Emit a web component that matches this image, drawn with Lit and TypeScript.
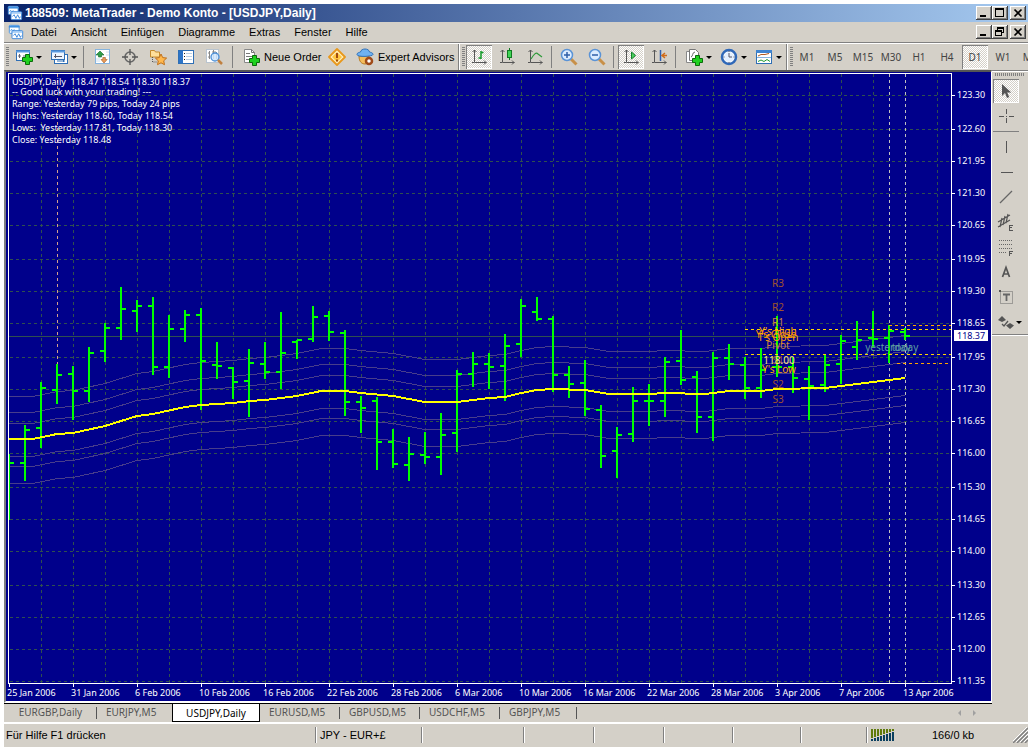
import { LitElement, html, svg, css, nothing, SVGTemplateResult } from "lit";
import { customElement } from "lit/decorators.js";
import { classMap } from "lit/directives/class-map.js";

/* ---------- chart data, in chart units: [open, high, low, close] ---------- */
const FIRST_BAR = 9;
const BAR_STEP = 16;
const BARS: number[][] = [
  [0, 454, 520, 463], [463, 425, 481, 430], [428, 382, 448, 388], [390, 364, 404, 375],
  [374, 366, 420, 391], [391, 347, 402, 353], [351, 323, 362, 328], [328, 287, 340, 309],
  [311, 300, 332, 306], [306, 297, 375, 367], [367, 315, 378, 329], [329, 310, 342, 315],
  [315, 308, 410, 361], [365, 342, 379, 366], [368, 367, 399, 382], [381, 349, 417, 363],
  [364, 342, 379, 372], [372, 312, 389, 353], [342, 340, 359, 340], [339, 306, 342, 317],
  [316, 311, 341, 332], [333, 330, 416, 402], [402, 396, 433, 408], [401, 397, 470, 442],
  [442, 429, 468, 464], [465, 437, 481, 454], [455, 432, 464, 457], [457, 413, 475, 435],
  [433, 370, 452, 374], [374, 352, 387, 364], [364, 353, 389, 367], [366, 334, 401, 346],
  [344, 299, 357, 306], [312, 297, 321, 319], [319, 316, 392, 375], [375, 366, 398, 384],
  [383, 360, 416, 409], [410, 405, 468, 456], [451, 427, 478, 435], [434, 387, 442, 401],
  [401, 384, 426, 401], [401, 357, 417, 362], [361, 330, 385, 380], [377, 371, 433, 417],
  [417, 352, 441, 358], [358, 344, 380, 364], [365, 357, 399, 388], [388, 348, 398, 370],
  [367, 316, 377, 367], [367, 357, 393, 378], [379, 366, 420, 386], [385, 354, 392, 365],
  [364, 335, 384, 341], [347, 321, 360, 340], [338, 311, 347, 339], [338, 325, 363, 331],
  [332, 328, 340, 336],
];

const AVERAGE: number[][] = [
  [9, 439], [33, 439], [57, 434], [73, 433], [105, 426], [137, 416], [153, 414], [185, 407],
  [201, 405], [217, 404], [233, 403], [250, 401], [265, 400], [281, 398], [297, 396], [321, 391],
  [345, 391], [361, 393], [393, 396], [425, 402], [457, 402], [473, 400], [489, 398], [505, 397],
  [521, 393], [537, 390], [553, 389], [585, 390], [609, 394], [649, 394], [665, 393], [705, 394],
  [729, 391], [761, 391], [777, 389], [825, 388], [857, 384], [889, 380], [905, 378],
];
const BANDS = [-43, -27, -16, 17, 27, 44];

const PRICES: [string, number][] = [
  ["123.30", 95], ["122.60", 129], ["121.95", 161], ["121.30", 193], ["120.65", 225],
  ["119.95", 259], ["119.30", 291], ["118.65", 323], ["117.95", 357], ["117.30", 389],
  ["116.65", 421], ["116.00", 453], ["115.30", 487], ["114.65", 519], ["114.00", 551],
  ["113.30", 585], ["112.65", 617], ["112.00", 649], ["111.35", 681],
];
const DATES = [
  "25 Jan 2006", "31 Jan 2006", "6 Feb 2006", "10 Feb 2006", "16 Feb 2006", "22 Feb 2006",
  "28 Feb 2006", "6 Mar 2006", "10 Mar 2006", "16 Mar 2006", "22 Mar 2006", "28 Mar 2006",
  "3 Apr 2006", "7 Apr 2006", "13 Apr 2006",
];
const COMMENTS: [string, number][] = [
  ["USDJPY,Daily  118.47 118.54 118.30 118.37", 85],
  ["-- Good luck with your trading! ---", 95],
  ["Range: Yesterday 79 pips, Today 24 pips", 107],
  ["Highs: Yesterday 118.60, Today 118.54", 119],
  ["Lows:  Yesterday 117.81, Today 118.30", 131],
  ["Close: Yesterday 118.48", 143],
];
const LEVELS: [string, number, number, string][] = [
  ["R3", 778, 287, "#a0522d"], ["R2", 778, 311, "#a0522d"], ["R1", 778, 326, "#cd853f"],
  ["Pivot", 778, 349, "#cd853f"], ["Y's High", 778, 335, "#ffa500"],
  ["Y's Close", 776, 338, "#ff8c00"], ["T's Open", 778, 341, "#ffa500"],
  ["S1", 778, 364, "#a0522d"], ["118.00", 779, 364, "#ffe680"], ["Y's Low", 779, 373, "#ffa500"],
  ["S2", 778, 388, "#a0522d"], ["S3", 778, 403, "#a0522d"],
  ["yesterday", 888, 351, "#5f9ea0"], ["today", 905, 351, "#5f9ea0"],
];

/* ---------- icons ---------- */
const plus = (x: number, y: number) => svg`
  <path d="M${x + 3} ${y}h4v3h3v4h-3v3h-4v-3h-3v-4h3z" fill="#1fd11f" stroke="#0a6b0a"/>`;
const arrows = (x: number, y: number) => svg`
  <path d="M${x + 0.5} ${y - 1}v12.500h12M${x - 1.5} ${y + 1}l2-2 2 2M${x + 10} ${y + 9.5}l2 2-2 2M${x - 2} ${y + 11.5}h2"
    fill="none" stroke="#555"/>`;
const sheet = svg`
  <path d="M2.500 1.500h7l3 3v10h-10z" fill="#fff" stroke="#888"/>
  <path d="M9.500 1.500v3h3M4 5.500h4M4 8.500h6M4 11.500h5" fill="none" stroke="#777"/>`;

const ICONS: Record<string, SVGTemplateResult> = {
  app: svg`
    <rect x="1.500" y="1.500" width="11" height="9" rx="1" fill="#fff" stroke="#3f8fe0"/>
    <path d="M1 3h12" stroke="#3f8fe0" stroke-width="2"/>
    <path d="M3 8l1-2 2 2 1-2" fill="none" stroke="#3f8fe0"/>
    <rect x="4.500" y="7.500" width="12" height="9" rx="1" fill="#fff" stroke="#2f80d8"/>
    <path d="M4 9h13" stroke="#5aa4ee"/>
    <path d="M6 13l2-2 2 4 2-4 2 4 1-2" fill="none" stroke="#2f80d8"/>`,
  newChart: svg`
    <rect x="1.500" y="2.500" width="13" height="10" fill="#fff" stroke="#2f6fb5"/>
    <path d="M1 3.500h14" stroke="#5b9be0" stroke-width="2"/>
    <path d="M4.500 6v4M3 8h3M8 8h3" stroke="#667"/>${plus(7.5, 6.5)}`,
  profiles: svg`
    <rect x="4.500" y="6.500" width="13" height="9" fill="#fff" stroke="#2f6fb5"/>
    <path d="M7 13h8M13.500 11v3" stroke="#2f6fb5"/>
    <rect x="1.500" y="2.500" width="13" height="9" fill="#eef6ff" stroke="#2f6fb5"/>
    <path d="M1 3.500h14" stroke="#5b9be0" stroke-width="2"/>
    <path d="M4 8.500h8M5.500 6v4" stroke="#556"/>`,
  market: svg`
    <rect x="2.500" y="1.500" width="14" height="14" fill="#fff" stroke="#86b4de"/>
    <path d="M13 4h3M13 7h3M3 11h4M3 13h4" stroke="#cfe0f0"/>
    <path d="M7 3l4 4h-2.500v2h-3v-2h-2.500z" fill="#2f9e4a" stroke="#14662a" stroke-width=".6"/>
    <path d="M11 15l-3-3.500h1.800v-2h2.600v2h1.800z" fill="#e79a5a" stroke="#a05a20" stroke-width=".6"/>`,
  cross: svg`
    <circle cx="9" cy="9" r="5" fill="none" stroke="#666" stroke-width="1.500"/>
    <path d="M9 1v6M9 11v6M1 9h6M11 9h6" stroke="#555" stroke-width="1.300"/>`,
  navigator: svg`
    <path d="M1.500 2.500h4l1 1.500h4v5h-9z" fill="#ffdf9a" stroke="#c48a2c"/>
    <path d="M3.500 9v5h4" fill="none" stroke="#555" stroke-dasharray="1 1"/>
    <path d="M12 6l1.700 3.600 3.900.5-2.900 2.700.8 3.900-3.500-1.900-3.500 1.900.8-3.900-2.900-2.700 3.900-.5z" fill="#ffb84d" stroke="#c0701a"/>`,
  terminal: svg`
    <rect x="1.500" y="2.500" width="15" height="13" fill="#fff" stroke="#2f6fb5"/>
    <rect x="2" y="3" width="4" height="12" fill="#2c74c8"/>
    <path d="M7 5.500h1M7 8.500h1M7 11.500h1" stroke="#222"/>
    <path d="M9 5.500h6M9 8.500h6M9 11.500h6" stroke="#b9cfe6"/>`,
  tester: svg`
    <rect x="1.500" y="1.500" width="12" height="13" fill="#fff" stroke="#b9c4cf"/>
    <path d="M4.500 3v8M3 5h2M8.500 2v9M7 4h4M11.500 4v7M3 9h2" stroke="#888"/>
    <circle cx="10" cy="9" r="4" fill="#cfe6ff" fill-opacity=".85" stroke="#4a8ed6" stroke-width="1.300"/>
    <path d="M13 12l4 4" stroke="#c08040" stroke-width="2.500"/>`,
  order: svg`${sheet}${plus(7.5, 7.5)}`,
  alert: svg`
    <path d="M9 1l8 8-8 8-8-8z" fill="#fff0c0" stroke="#e8981c" stroke-width="1.800" stroke-linejoin="round"/>
    <path d="M9 4l5 5-5 5-5-5z" fill="#ffc540"/>
    <path d="M9 5v5M9 11.500v2" stroke="#a04a10" stroke-width="2"/>`,
  expert: svg`
    <path d="M3 8c0 6 3 8 6 8s4-3 4-8z" fill="#f5bd5c" stroke="#b87a20"/>
    <path d="M1 6.500c0-2 2.500-2 3.500-2.500.5-4 8.500-4 9 0 1 .5 3.500.5 3.500 2.500s-16 3-16 0z" fill="#6fb2f2" stroke="#3070b8"/>
    <circle cx="13" cy="13" r="3" fill="#fff" stroke="#a04a18" stroke-width="2.500"/>`,
  bars: svg`${arrows(4, 3)}
    <path d="M11 3v8M11 4.500h2.500M8.500 10h2.500" stroke="#159a2a" stroke-width="1.500"/>`,
  candles: svg`${arrows(4, 3)}
    <path d="M11.500 0v12" stroke="#117a22"/>
    <rect x="9.500" y="2.500" width="4" height="7" fill="#3fd455" stroke="#117a22"/>`,
  line: svg`${arrows(4, 3)}
    <path d="M5 11c3-5 5-7 7-5l4 3" fill="none" stroke="#2f9a3a" stroke-width="1.200"/>`,
  zoomIn: svg`
    <path d="M11 11l5.500 5.500" stroke="#c89048" stroke-width="3"/>
    <circle cx="7" cy="7" r="5.500" fill="#dcecff" stroke="#5a93d6" stroke-width="1.500"/>
    <path d="M4 7h6M7 4v6" stroke="#2f5fa8" stroke-width="1.500"/>`,
  zoomOut: svg`
    <path d="M11 11l5.500 5.500" stroke="#c89048" stroke-width="3"/>
    <circle cx="7" cy="7" r="5.500" fill="#dcecff" stroke="#5a93d6" stroke-width="1.500"/>
    <path d="M4 7h6" stroke="#2f5fa8" stroke-width="1.500"/>`,
  scroll: svg`${arrows(4, 3)}<path d="M9.500 4v7l4-3.500z" fill="#4fd060" stroke="#14802a"/>`,
  shift: svg`${arrows(4, 3)}
    <path d="M10.500 2v11" stroke="#2f5fb0" stroke-width="1.500"/>
    <path d="M17 7.500h-4M15 5l-3 2.500 3 2.500" fill="none" stroke="#d06a18" stroke-width="1.500"/>`,
  indicators: svg`
    <path d="M1.500 3.500h6l3 3v8h-9z" fill="#fff" stroke="#888"/>
    <path d="M4.500 1.500h6l3 3v8h-9z" fill="#fff" stroke="#777"/>
    <path d="M6 9c2 0 1-5 4-5" fill="none" stroke="#666"/>${plus(7.5, 7.5)}`,
  periods: svg`
    <circle cx="9" cy="9" r="7" fill="#fff" stroke="#2f68b8" stroke-width="2.500"/>
    <circle cx="9" cy="9" r="5" fill="#e4f0ff"/>
    <path d="M9 5v4h3M9 3v1M9 14v1M3.500 9h1M13.500 9h1" fill="none" stroke="#556"/>`,
  templates: svg`
    <rect x="1.500" y="2.500" width="15" height="13" fill="#fff" stroke="#2f6fb5"/>
    <path d="M1 3.500h16" stroke="#3f84d0" stroke-width="3"/>
    <path d="M2 9.500h14" stroke="#86b4de"/>
    <path d="M3 8l3-1.500h4l4-1" fill="none" stroke="#b05a20"/>
    <path d="M3 13.500l3-1.500 3 1.500 3-2 3 2" fill="none" stroke="#209a30"/>`,
  pointer: svg`<path d="M5 2v12l3-3 2 5 2.200-1-2-4.500h4z" fill="#555"/>`,
  crosshair: svg`<path d="M9.500 2v5M9.500 11v5M2 9.500h5M12 9.500h5M9 9.500h1" stroke="#555" shape-rendering="crispEdges"/>`,
  vertical: svg`<path d="M9.500 3v12" stroke="#555" shape-rendering="crispEdges"/>`,
  horizontal: svg`<path d="M4 9.500h12" stroke="#555" shape-rendering="crispEdges"/>`,
  trend: svg`<path d="M3 15L15 3" stroke="#666" stroke-width="1.300"/>`,
  channel: svg`
    <path d="M1 9l12-7M1 14l12-7M5 5l-2 9M8 3l-2 9M11 1l-2 9" stroke="#555" stroke-width="1.200"/>
    <path d="M12 12.500h4M12 14.500h3M12 17.500h4M12.500 12v6" stroke="#555"/>`,
  fibo: svg`
    <path d="M2 2.500h14M2 6.500h14M2 10.500h14M2 14.500h8" stroke="#666" stroke-dasharray="1 1"/>
    <path d="M12 13.500h4M12 15.500h3M12.500 13v5" stroke="#555"/>`,
  textLabel: svg`<path d="M5.500 14l3.500-9.500 3.500 9.500M6.500 11h5" fill="none" stroke="#555" stroke-width="1.700"/>`,
  textBox: svg`
    <rect x="3.500" y="3.500" width="12" height="12" fill="none" stroke="#666" stroke-dasharray="1 1"/>
    <path d="M6 6.500h7M9.500 6v7" stroke="#666" stroke-width="1.800"/>
    <rect x="2" y="2" width="2" height="2" fill="#555"/>`,
  shapes: svg`
    <path d="M5 3l4 4-4 2-4-2zM13 16l-4-3.500 4-2.500 4 2.500z" fill="#555"/>
    <path d="M5 11l2 2 4-5" fill="none" stroke="#555" stroke-width="1.300"/>`,
};

const icon = (name: string) => html`
  <svg class="icon" viewBox="0 0 18 18" width="18" height="18" aria-hidden="true">${ICONS[name]}</svg>`;

type Item = { kind: string; icon?: string; text?: string; label?: string; on?: boolean };
const b = (name: string, label: string, on = false): Item => ({ kind: "tool", icon: name, label, on });
const d = (name: string, label: string): Item => ({ kind: "drop", icon: name, label });
const t = (text: string, on = false): Item => ({ kind: "frame", text, on });
const TOOLS: Item[] = [
  { kind: "grip" }, d("newChart", "Neues Diagramm"), d("profiles", "Profile"), { kind: "sep" },
  b("market", "Marktübersicht"), b("cross", "Datenfenster"), b("navigator", "Navigator"),
  b("terminal", "Terminal"), b("tester", "Tester"), { kind: "sep" },
  { kind: "order", icon: "order", text: "Neue Order" }, b("alert", "MetaEditor"),
  { kind: "advisor", icon: "expert", text: "Expert Advisors" }, { kind: "edge" }, { kind: "grip" },
  b("bars", "Balken", true), b("candles", "Kerzen"), b("line", "Linie"), { kind: "thin" },
  b("zoomIn", "Vergrößern"), b("zoomOut", "Verkleinern"), { kind: "thin" },
  b("scroll", "Bildlauf", true), b("shift", "Verschiebung"), { kind: "thin" },
  d("indicators", "Indikatoren"), d("periods", "Zeitrahmen"), d("templates", "Vorlagen"),
  { kind: "edge" }, { kind: "grip" },
  t("M1"), t("M5"), t("M15"), t("M30"), t("H1"), t("H4"), t("D1", true), t("W1"), t("MN"),
];
const DRAWING: Item[] = [
  b("pointer", "Zeiger", true), b("crosshair", "Fadenkreuz"), { kind: "rule" },
  b("vertical", "Vertikale"), b("horizontal", "Horizontale"), b("trend", "Trendlinie"),
  b("channel", "Kanal"), b("fibo", "Fibonacci"), b("textLabel", "Text"),
  b("textBox", "Textfeld"), d("shapes", "Pfeile"),
];

@customElement("chart-view")
class ChartView extends LitElement {
  static styles = css`
    :host { display: grid; grid-template: minmax(0, 1fr) 17px / minmax(0, 1fr) 39px;
      background: #00008b; padding: 1px 0 0 2px; min-height: 0; }
    svg { display: block; width: 100%; height: 100%; overflow: hidden; font: 10px "Noto Sans", sans-serif; }
    .plot { border: 1px solid #fff; min-height: 0; overflow: hidden; }
    .prices, .dates { min-height: 0; min-width: 0; }
    .prices svg { overflow: visible; }
    .dates { grid-column: 1 / 3; margin-left: -2px; }
    .crisp { shape-rendering: crispEdges; fill: none; }
    .grid { stroke: #2f4f4f; stroke-dasharray: 3 3; }
    .bid { stroke: #2f4f4f; }
    .band { stroke: #483d8b; }
    .average { stroke: #ff0; stroke-width: 2; }
    .bar { stroke: #0f0; stroke-width: 2; }
    .gold { stroke: #ffd700; stroke-dasharray: 3 3; }
    .orange { stroke: #ffa500; stroke-dasharray: 3 3; }
    .coral { stroke: #d2a08c; stroke-dasharray: 3 3; }
    .silver { stroke: #c0c0c0; stroke-dasharray: 3 3; }
    .tick { stroke: #fff; }
    .note { font-size: 9px; fill: #fff; white-space: pre; }
    .level { text-anchor: middle; }
    .axis { font-size: 9px; fill: #fff; }
    .now { fill: #00008b; }
    .chip { fill: #fff; }
  `;

  render() {
    const grid = Array.from({ length: 29 }, (_, i) => 41.5 + 32 * i);
    const path = (dy: number) => AVERAGE.map(([x, y]) => `${x},${y + dy}`).join(" ");
    return html`
      <div class="plot">
        <svg role="img" aria-label="USDJPY,Daily">
          <g transform="translate(-9 -74)">
            <g class="crisp">
              ${grid.map((x) => svg`<path class="grid" d="M${x} 74v2000"/>`)}
              ${PRICES.map(([, y]) => svg`<path class="grid" d="M10 ${y + 0.5}h3000"/>`)}
              <path class="bid" d="M9 336.5h3000"/>
              <path class="coral" d="M57.5 74v316"/>
              <path class="silver" d="M889.5 74v2000M905.5 74v2000"/>
              ${BANDS.map((dy) => svg`<polyline class="band" points=${path(dy + 0.5)}/>`)}
              ${BARS.map(([o, h, l, c], i) => {
                const x = FIRST_BAR + i * BAR_STEP;
                return svg`<path class="bar" d="M${x} ${h}V${l}M${x} ${c}h5${o ? `M${x - 5} ${o}h5` : ""}"/>`;
              })}
              <polyline class="average" points=${path(0)}/>
              <path class="gold" d="M745 329.5h3000M745 354.5h3000"/>
              <path class="orange" d="M889 325.5h3000M897 363.5h3000"/>
            </g>
            ${LEVELS.map(([s, x, y, c]) => svg`<text class="level" x=${x} y=${y} fill=${c}>${s}</text>`)}
            ${COMMENTS.map(([s, y]) => svg`<text class="note" x="12" y=${y}>${s}</text>`)}
          </g>
        </svg>
      </div>
      <div class="prices">
        <svg>
          <g transform="translate(-952 -73)">
            ${PRICES.map(([s, y]) => svg`
              <path class="crisp tick" d="M952 ${y + 0.5}h3"/>
              <text class="axis" x="957" y=${y + 3}>${s}</text>`)}
            <rect class="chip" x="954" y="330" width="34" height="11"/>
            <text class="axis now" x="957" y="339">118.37</text>
          </g>
        </svg>
      </div>
      <div class="dates">
        <svg>
          <g transform="translate(-6 -684)">
            ${DATES.map((s, i) => svg`
              <path class="crisp tick" d="M${9.5 + 64 * i} 684v3"/>
              <text class="axis" x=${7 + 64 * i} y="696">${s}</text>`)}
          </g>
        </svg>
      </div>`;
  }
}

@customElement("app-root")
class AppRoot extends LitElement {
  static styles = css`
    :host { display: flex; flex-direction: column; height: 100vh; box-sizing: border-box;
      padding: 4px 4px 0; background: #fff; color: #000; font: 11px "Liberation Sans", sans-serif; overflow: hidden; }
    button { font: inherit; color: inherit; border: 0; padding: 0; margin: 0; background: none;
      flex: none; display: flex; align-items: center; }
    svg { display: block; flex: none; }
    .title { display: flex; align-items: center; height: 18px; padding: 0 2px 0 3px; gap: 2px; color: #fff;
      font-size: 12px; font-weight: bold; background: linear-gradient(90deg, #0a246a, #a6caf0); }
    .name { flex: 1; white-space: nowrap; overflow: hidden; }
    .menu { display: flex; align-items: center; height: 20px; padding: 0 2px 0 4px; background: #d4d0c8;
      border-bottom: 1px solid #808080; }
    .menu nav { display: flex; flex: 1; }
    .entry { padding: 0 7px; height: 20px; }
    .small { width: 16px; height: 16px; }
    .buttons { display: flex; }
    .win { width: 16px; height: 14px; background: #d4d0c8; justify-content: center;
      box-shadow: inset -1px -1px #404040, inset 1px 1px #fff, inset -2px -2px #808080; }
    .close { margin-left: 2px; }
    .tools { display: flex; align-items: center; height: 26px; flex: none; overflow: hidden;
      background: #d4d0c8; border-top: 1px solid #fff; color: #000; }
    .tool { width: 28px; height: 26px; justify-content: center; }
    .drop { width: 35px; height: 26px; padding-left: 6px; box-sizing: border-box; gap: 3px; }
    .drop::after { content: ""; border: 3px solid transparent; border-top-color: #000; border-bottom: 0; }
    .order, .advisor { gap: 4px; padding-left: 5px; box-sizing: border-box; white-space: nowrap; }
    .order { width: 86px; }
    .advisor { width: 105px; }
    .frame { width: 28px; justify-content: center; color: #444; font: 10px "Noto Sans", sans-serif; height: 26px; }
    .on { background: repeating-conic-gradient(#fff 0 25%, #d4d0c8 0 50%) 0 0 / 2px 2px;
      box-shadow: inset 1px 1px #808080, inset -1px -1px #fff; width: 26px; height: 24px; margin: 0 1px; }
    .sep { width: 9px; height: 22px; flex: none; background: linear-gradient(#808080, #808080) 4px 0 / 1px 100% no-repeat; }
    .thin { width: 6px; height: 22px; flex: none; background: linear-gradient(#808080, #808080) 2px 0 / 1px 100% no-repeat; }
    .edge { width: 4px; height: 26px; flex: none; background: linear-gradient(90deg, #808080 50%, #fff 50%) 2px 0 / 2px 100% no-repeat; }
    .grip { width: 3px; height: 20px; flex: none; margin: 0 0 0 2px;
      background: repeating-linear-gradient(#808080 0 1px, #d4d0c8 1px 2px); }
    .main { display: flex; flex: 1; min-height: 0; }
    .work { flex: 1; min-width: 0; display: flex; flex-direction: column; background: #d4d0c8; }
    .sunken { flex: 1; min-height: 0; display: flex; flex-direction: column;
      border: solid; border-width: 2px 1px 2px 2px; border-color: #555 #fff #fff #808080; }
    .sunken chart-view { flex: 1; }
    .tabs { display: grid; grid-template-columns: 93px 75px 88px 80px 80px 80px 77px 1fr 34px; height: 18px;
      flex: none; border-top: 1px solid #000; font: 10px "Noto Sans", sans-serif; color: #555; }
    .tab { justify-content: center; height: 16px; white-space: nowrap; }
    .tab.lead { justify-content: flex-start; padding-left: 9px; }
    .tab.split { background: linear-gradient(#555, #555) right 3px / 1px 12px no-repeat; }
    .tab.active { background: #fff; color: #000; border: 1px solid #000; border-top: 0; height: 18px; }
    .pager { display: flex; gap: 12px; align-items: center; }
    .pager button::before { content: ""; border: 3px solid transparent; }
    .pager .prev::before { border-right-color: #a0a0a0; border-left: 0; }
    .pager .next::before { border-left-color: #a0a0a0; border-right: 0; }
    .side { width: 36px; flex: none; background: #d4d0c8; border-top: 1px solid #808080; display: flex; flex-direction: column; box-sizing: border-box; }
    .palette { display: flex; flex-direction: column; padding: 1px 1px 0; gap: 1px;
      border-top: 1px solid #fff; border-bottom: 1px solid #808080; box-shadow: 0 1px #fff; }
    .palette .tool { width: 26px; height: 24px; }
    .palette .on { margin: 0; }
    .palette .drop { width: 32px; height: 24px; padding-left: 4px; gap: 1px; }
    .bump { height: 3px; margin: 0 2px 2px; background: repeating-linear-gradient(90deg, #808080 0 1px, #d4d0c8 1px 2px); }
    .rule { height: 1px; width: 26px; margin: 2px 0; background: #808080; }
    .status { display: grid; grid-template-columns: minmax(0, 1fr) 106px 102px 70px 70px 69px 68px 66px 162px;
      flex: none; height: 26px; box-sizing: border-box; border-top: 2px solid #fff; background: #d4d0c8;
      align-items: center; }
    .status::after { content: ""; grid-column: 1 / -1; height: 1px; background: #fff; align-self: end; }
    .cell { height: 16px; line-height: 16px; margin-top: 2px; border-left: 1px solid #808080; box-shadow: inset 1px 0 #fff;
      padding-left: 4px; display: flex; align-items: center; white-space: nowrap; }
    .cell.first { border: 0; box-shadow: none; padding-left: 2px; }
    .traffic { gap: 37px; }
    .size { flex: 1; }
  `;

  private item(i: Item) {
    if (!i.icon && !i.text) return html`<span class=${i.kind}></span>`;
    return html`
      <button type="button" aria-label=${i.label ?? i.text ?? nothing} class=${classMap({ [i.kind]: true, on: !!i.on })}>
        ${i.icon ? icon(i.icon) : nothing}${i.text ?? nothing}
      </button>`;
  }

  private windowButtons(middle: SVGTemplateResult) {
    const glyph = (g: SVGTemplateResult) => html`
      <svg width="12" height="10" viewBox="0 0 12 10" shape-rendering="crispEdges" fill="none" stroke="#000">${g}</svg>`;
    return html`
      <div class="buttons">
        <button type="button" class="win" aria-label="Minimieren">${glyph(svg`<path d="M2 8h6" stroke-width="2"/>`)}</button>
        <button type="button" class="win" aria-label="Fenster">${glyph(middle)}</button>
        <button type="button" class="win close" aria-label="Schließen">
          ${glyph(svg`<path d="M2.500 1.500l7 7M9.500 1.500l-7 7" stroke-width="1.700" shape-rendering="auto"/>`)}
        </button>
      </div>`;
  }

  render() {
    const small = html`<svg class="small" viewBox="0 0 18 18" aria-hidden="true">${ICONS.app}</svg>`;
    const tabs = ["EURGBP,Daily", "EURJPY,M5", "USDJPY,Daily", "EURUSD,M5", "GBPUSD,M5", "USDCHF,M5", "GBPJPY,M5"];
    return html`
      <header class="title">
        ${small}<span class="name">188509: MetaTrader - Demo Konto - [USDJPY,Daily]</span>
        ${this.windowButtons(svg`<path d="M1.500 .5h8v8h-8zM1 1.500h9"/>`)}
      </header>
      <div class="menu">
        ${small}
        <nav>
          ${["Datei", "Ansicht", "Einfügen", "Diagramme", "Extras", "Fenster", "Hilfe"].map(
            (m) => html`<button type="button" class="entry">${m}</button>`)}
        </nav>
        ${this.windowButtons(svg`<path d="M3.500 3V.5h6v5h-2M3 1.500h7M1.500 3.500h6v5h-6zM1 4.500h7"/>`)}
      </div>
      <div class="tools">${TOOLS.map((i) => this.item(i))}</div>
      <div class="main">
        <section class="work">
          <div class="sunken"><chart-view></chart-view></div>
          <div class="tabs">
            ${tabs.map((name, i) => html`
              <button type="button" class=${classMap({
                tab: true, active: i === 2, lead: i === 1 || i > 2, split: i !== 1 && i !== 2,
              })}>${name}</button>`)}
            <span></span>
            <span class="pager">
              <button type="button" class="prev" aria-label="Zurück"></button>
              <button type="button" class="next" aria-label="Weiter"></button>
            </span>
          </div>
        </section>
        <aside class="side">
          <div class="palette"><span class="bump"></span>${DRAWING.map((i) => this.item(i))}</div>
        </aside>
      </div>
      <footer class="status">
        <span class="cell first">Für Hilfe F1 drücken</span>
        <span class="cell">JPY - EUR+£</span>
        ${[0, 1, 2, 3, 4, 5].map(() => html`<span class="cell"></span>`)}
        <span class="cell traffic">
          <svg width="24" height="12" shape-rendering="crispEdges" aria-hidden="true">
            ${[0, 1, 2, 3, 4, 5, 6, 7].map((k) => svg`
              <path d="M${k * 3 + 1} 0v${9 - k}" stroke="#5f7a0a" stroke-width="2"/>
              <path d="M${k * 3 + 1} ${10 - k}V12" stroke="#0a3f5f" stroke-width="2"/>`)}
          </svg>
          <span class="size">166/0 kb</span>
          <svg width="15" height="16" aria-hidden="true">
            <path d="M0 16L15 1M4 16L15 5M8 16l7-7M12 16l3-3" stroke="#808080" stroke-width="1.500"/>
            <path d="M-1 15L14 0M3 15L15 3M7 15l8-8M11 15l4-4" stroke="#fff"/>
          </svg>
        </span>
      </footer>`;
  }
}
